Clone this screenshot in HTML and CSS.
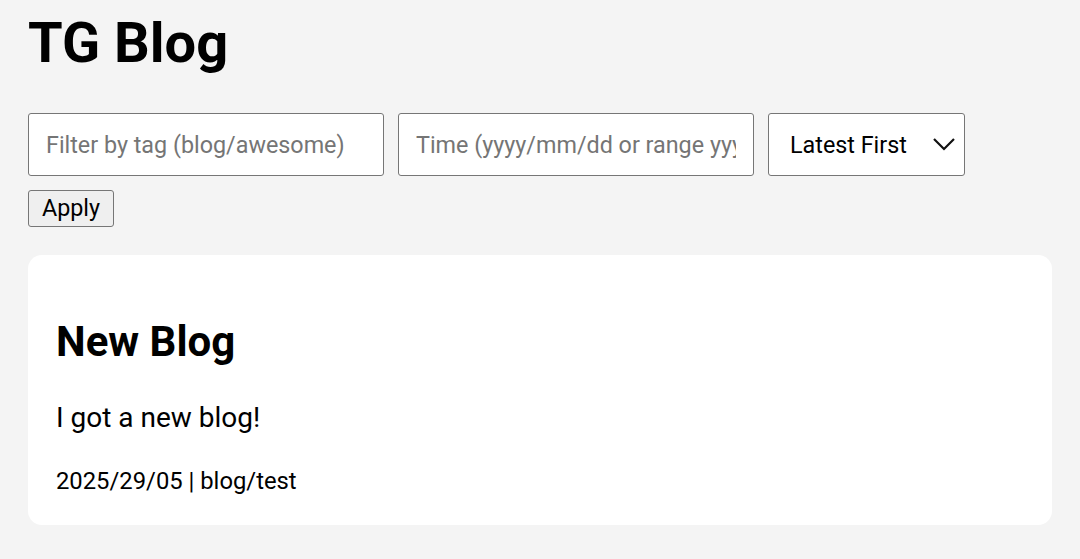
FILE: index.html
```html
<!DOCTYPE html>
<html lang="en">
<head>
<meta charset="utf-8">
<title>TG Blog</title>
<link rel="stylesheet" href="styles.css">
</head>
<body>
<main class="page">
  <h1 class="title">TG Blog</h1>
  <form class="filters">
    <input class="field" type="text" placeholder="Filter by tag (blog/awesome)">
    <input class="field" type="text" placeholder="Time (yyyy/mm/dd or range yyyy/mm/dd-yyyy/mm/dd)">
    <div class="select-wrap">
      <select class="sort">
        <option>Latest First</option>
        <option>Oldest First</option>
      </select>
      <svg class="chev" width="24" height="14" viewBox="0 0 24 14"><path d="M2 2 L12 12 L22 2" fill="none" stroke="#111" stroke-width="2.2"/></svg>
    </div>
    <button class="apply" type="button">Apply</button>
  </form>
  <article class="card">
    <h2 class="card-title">New Blog</h2>
    <p class="card-body">I got a new blog!</p>
    <div class="card-meta">2025/29/05 | blog/test</div>
  </article>
</main>
</body>
</html>
```

FILE: styles.css
```css
* { box-sizing: border-box; }
html, body {
  margin: 0;
  padding: 0;
  background: #f4f4f4;
}
body {
  font-family: Roboto, "Liberation Sans", Arial, sans-serif;
  color: #000;
  font-size: 28px;
}
.page {
  padding: 10px 28px 28px;
}
.title {
  font-size: 56px;
  font-weight: 700;
  margin: 0 0 36.5px;
  line-height: normal;
}
.filters {
  display: flex;
  flex-wrap: wrap;
  gap: 14px;
  width: 960px;
}
.field {
  width: 356px;
  height: 63px;
  border: 1px solid #767676;
  border-radius: 3px;
  background: #fff;
  padding: 2px 17px 0;
  font-family: Roboto, "Liberation Sans", Arial, sans-serif;
  font-size: 23.33px;
  color: #000;
}
.field::placeholder { color: #757575; }
.select-wrap {
  position: relative;
  width: 197px;
  height: 63px;
}
.sort {
  appearance: none;
  -webkit-appearance: none;
  width: 100%;
  height: 100%;
  border: 1px solid #767676;
  border-radius: 3px;
  background: #fff;
  padding: 2px 0 0 21px;
  font-family: Roboto, "Liberation Sans", Arial, sans-serif;
  font-size: 23.33px;
  color: #000;
}
.chev {
  position: absolute;
  left: 164px;
  top: 24px;
  pointer-events: none;
}
.apply {
  flex-basis: 86px;
  width: 86px;
  height: 37px;
  padding: 0 0 1px;
  border: 1px solid #767676;
  border-radius: 3px;
  background: #efefef;
  font-family: Roboto, "Liberation Sans", Arial, sans-serif;
  font-size: 23.33px;
  color: #000;
}
.card {
  margin-top: 28px;
  background: #fff;
  border-radius: 14px;
  padding: 28px 28px 30px;
}
.card-title {
  font-size: 42px;
  font-weight: 700;
  margin: 34px 0 35px;
  line-height: normal;
}
.card-body {
  margin: 0 0 33px;
  font-size: 28px;
  line-height: normal;
}
.card-meta {
  font-size: 23.8px;
  line-height: normal;
}
```
